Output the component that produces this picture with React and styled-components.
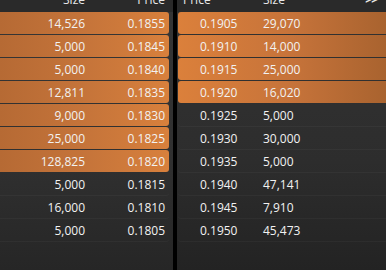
import React from "react";
import styled, { createGlobalStyle } from "styled-components";

const bids = [
    { size: "14,526", price: "0.1855", filled: true },
    { size: "5,000", price: "0.1845", filled: true },
    { size: "5,000", price: "0.1840", filled: true },
    { size: "12,811", price: "0.1835", filled: true },
    { size: "9,000", price: "0.1830", filled: true },
    { size: "25,000", price: "0.1825", filled: true },
    { size: "128,825", price: "0.1820", filled: true },
    { size: "5,000", price: "0.1815" },
    { size: "16,000", price: "0.1810" },
    { size: "5,000", price: "0.1805" },
];

const asks = [
    { price: "0.1905", size: "29,070", filled: true },
    { price: "0.1910", size: "14,000", filled: true },
    { price: "0.1915", size: "25,000", filled: true },
    { price: "0.1920", size: "16,020", filled: true },
    { price: "0.1925", size: "5,000" },
    { price: "0.1930", size: "30,000" },
    { price: "0.1935", size: "5,000" },
    { price: "0.1940", size: "47,141" },
    { price: "0.1945", size: "7,910" },
    { price: "0.1950", size: "45,473" },
];

const App = () => (
    <>
        <GlobalStyle />
        <Board>
            <Side>
                <BidHeader>
                    <Label>Size</Label>
                    <Label>Price</Label>
                </BidHeader>
                <Rows>
                    {bids.map((row, i) => (
                        <BidRow key={i} $filled={row.filled}>
                            <span>{row.size}</span>
                            <span>{row.price}</span>
                        </BidRow>
                    ))}
                </Rows>
            </Side>
            <Divider />
            <Side $ask>
                <AskHeader>
                    <Label>Price</Label>
                    <Label>Size</Label>
                    <More>&gt;&gt;</More>
                </AskHeader>
                <Rows>
                    {asks.map((row, i) => (
                        <AskRow key={i} $filled={row.filled}>
                            <span>{row.price}</span>
                            <span>{row.size}</span>
                        </AskRow>
                    ))}
                </Rows>
            </Side>
        </Board>
    </>
);

export default App;

const GlobalStyle = createGlobalStyle`
    body {
        margin: 0;
        background: #2c2c2c;
        font-family: "Open Sans", "Noto Sans", sans-serif;
    }
`;

const Board = styled.div`
    display: grid;
    grid-template-columns: 173px 4px 1fr;
    width: 386px;
    height: 270px;
    overflow: hidden;
    background: linear-gradient(180deg, #363636 0%, #303030 60%, #262626 100%);
`;

const Side = styled.div`
    display: flex;
    flex-direction: column;
    background: ${p => p.$ask ? "rgba(0,0,0,0.06)" : "transparent"};
`;

const Divider = styled.div`
    background: #000;
`;

const Header = styled.div`
    display: grid;
    height: 12px;
    overflow: hidden;
    background: #2a2a2a;
    color: #e8e8e8;
    font-size: 12px;
    line-height: 16px;
`;

const BidHeader = styled(Header)`
    grid-template-columns: 85px 80px;
    text-align: right;
`;

const AskHeader = styled(Header)`
    grid-template-columns: 80px 1fr auto;
    padding-left: 6px;
    padding-right: 9px;
`;

const Label = styled.span`
    margin-top: -8px;
`;

const More = styled.span`
    margin-top: -8px;
    letter-spacing: -1px;
    font-weight: bold;
`;

const Rows = styled.div`
    display: flex;
    flex-direction: column;
    gap: 1px;
`;

const Row = styled.div`
    display: grid;
    height: 22px;
    align-items: center;
    color: #f2f2f2;
    font-size: 12px;
    box-shadow: ${p => p.$filled ? "none" : "0 1px 0 rgba(255,255,255,0.035)"};
`;

const BidRow = styled(Row)`
    width: 169px;
    grid-template-columns: 85px 80px;
    text-align: right;
    border-radius: 0 3px 3px 0;
    background: ${p => p.$filled
        ? "linear-gradient(90deg, #b66a34 0%, #c5743a 50%, #d8803c 100%)"
        : "transparent"};
`;

const AskRow = styled(Row)`
    margin-left: 1px;
    padding-left: 22px;
    grid-template-columns: 63px 1fr;
    border-radius: 3px 0 0 3px;
    background: ${p => p.$filled
        ? "linear-gradient(90deg, #db803b 0%, #c6733a 55%, #a9632f 100%)"
        : "transparent"};
`;
